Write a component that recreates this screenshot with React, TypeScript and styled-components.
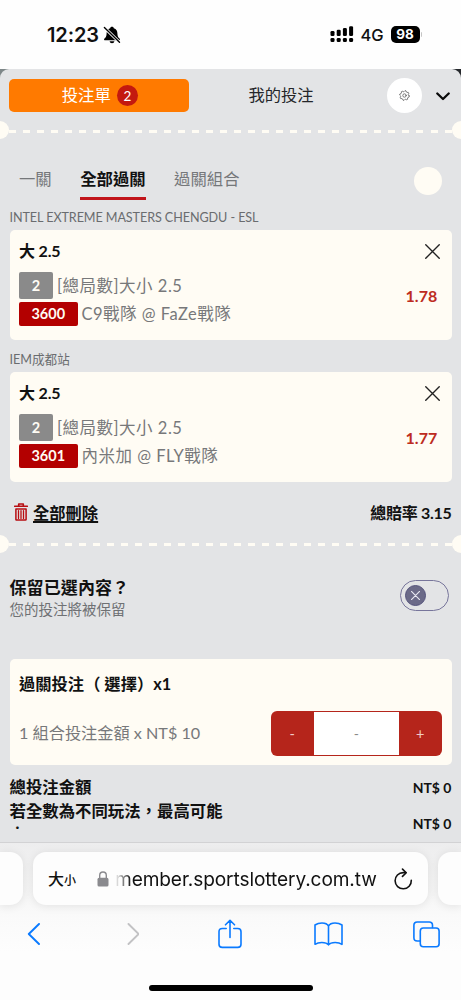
import React from "react";
import styled, { createGlobalStyle } from "styled-components";

const body = `Lato, "Noto Sans CJK TC", sans-serif`;
const system = `Inter, "Noto Sans CJK TC", sans-serif`;
const cream = "#fffcf4";

const GlobalStyle = createGlobalStyle`
  * { box-sizing: border-box; }
  body { margin: 0; background: #fdfdfd; font-family: ${body}; color: #111; }
  button { border: 0; padding: 0; background: none; font: inherit; color: inherit; }
`;

const Screen = styled.main`
  width: 461px;
  height: 1000px;
  overflow: hidden;
  display: flex;
  flex-direction: column;
`;

const StatusBar = styled.header`
  height: 69px;
  flex: none;
  display: flex;
  align-items: center;
  padding: 0 39px 0 47px;
  background: #fefefe;
  font-family: ${system};
`;
const Clock = styled.span`
  font-size: 20px;
  font-weight: 600;
  letter-spacing: -0.1px;
  width: 56px;
`;
const Signals = styled.div`
  margin-left: auto;
  display: flex;
  align-items: center;
`;
const Network = styled.span`
  font-size: 16.5px;
  font-weight: 500;
  width: 22px;
  margin: 0 8px 0 7px;
  white-space: nowrap;
`;
const Battery = styled.span`
  width: 29px;
  height: 17px;
  border-radius: 5px;
  background: #000;
  color: #fff;
  font-size: 13.5px;
  font-weight: 700;
  line-height: 17px;
  text-align: center;
`;
const BatteryTip = styled.i`
  width: 1.5px;
  height: 5px;
  margin-left: 1px;
  background: #c4c4c4;
  border-radius: 0 2px 2px 0;
`;

const Backdrop = styled.div`
  flex: none;
  height: 773px;
  background: linear-gradient(90deg, #7e8788 0 50%, #25282c 50%);
`;
const Sheet = styled.section`
  height: 773px;
  border-radius: 9px 9px 0 0;
  background: #e3e4e6;
  overflow: hidden;
`;
const SlipHeader = styled.div`
  height: 52px;
  display: flex;
  align-items: center;
  padding: 0 10px 0 9px;
`;
const SlipButton = styled.button`
  width: 179.5px;
  height: 33px;
  display: flex;
  align-items: center;
  justify-content: center;
  gap: 6px;
  border-radius: 5px;
  padding: 0 0 2px 2px;
  background: #ff7a00;
  color: #fff;
  font-size: 16.4px;
  font-weight: 400;
`;
const Count = styled.span`
  width: 21px;
  height: 21px;
  border-radius: 50%;
  background: #c4190f;
  font-size: 13.5px;
  line-height: 22px;
  text-align: center;
  margin-top: 2px;
`;
const MyBets = styled.button`
  width: 185px;
  padding-bottom: 2px;
  font-size: 16.3px;
  text-align: center;
  color: #24262a;
`;
const Round = styled.button<{ $size: number; $color: string }>`
  width: ${(p) => p.$size}px;
  height: ${(p) => p.$size}px;
  border-radius: 50%;
  background: ${(p) => p.$color};
  display: flex;
  align-items: center;
  justify-content: center;
`;
const SettingsButton = styled(Round)`
  margin-left: 13px;
`;
const Collapse = styled.button`
  margin: 2px 0 0 14px;
  display: flex;
`;

const Perforation = styled.div<{ $top: number }>`
  height: 18px;
  margin-top: ${(p) => p.$top}px;
  display: flex;
  align-items: center;
  justify-content: space-between;
  &::before, &::after {
    content: "";
    width: 9px;
    height: 18px;
    background: ${cream};
    border-radius: 0 9px 9px 0;
  }
  &::after { border-radius: 9px 0 0 9px; }
`;
const Dashes = styled.div`
  flex: 1;
  height: 3px;
  margin-top: 2px;
  background: repeating-linear-gradient(90deg, ${cream} 0 7px, transparent 7px 14.05px);
`;

const Tabs = styled.nav`
  height: 31px;
  margin: 28px 19px 0;
  display: flex;
  align-items: flex-start;
`;
const Tab = styled.button<{ $active?: boolean }>`
  height: 32.5px;
  padding-bottom: 5px;
  margin-right: 28.5px;
  font-size: 16.35px;
  line-height: 24px;
  font-weight: ${(p) => (p.$active ? 700 : 400)};
  color: ${(p) => (p.$active ? "#111" : "#75777a")};
  border-bottom: 3.5px solid ${(p) => (p.$active ? "#c1141a" : "transparent")};
`;
const TabExtra = styled.div`
  margin-left: auto;
`;

const League = styled.h3<{ $top: number; $spacing: number }>`
  height: 18px;
  margin: ${(p) => p.$top}px 0 3px 9.5px;
  font-size: 12.6px;
  font-weight: 400;
  line-height: 18px;
  letter-spacing: ${(p) => p.$spacing}px;
  color: #6a6c6f;
`;
const Card = styled.article<{ $height: number }>`
  height: ${(p) => p.$height}px;
  margin: 0 9.5px;
  padding: 0 9.5px;
  border-radius: 5px;
  background: ${cream};
`;
const CardHead = styled.div`
  height: 42px;
  display: flex;
  align-items: center;
  justify-content: space-between;
  padding-right: 2.5px;
`;
const Pick = styled.h2`
  margin: 0;
  padding-bottom: 2px;
  font-size: 16px;
  font-weight: 700;
  letter-spacing: -0.15px;
`;
const CardBody = styled.div`
  display: flex;
  align-items: center;
  justify-content: space-between;
  padding-right: 4.5px;
`;
const Lines = styled.div`
  display: flex;
  flex-direction: column;
  gap: 3.5px;
`;
const Line = styled.div<{ $height: number }>`
  height: ${(p) => p.$height}px;
  display: flex;
  align-items: center;
  gap: 4px;
  font-size: 16.5px;
  letter-spacing: 0.5px;
  color: #77787a;
  white-space: nowrap;
`;
const Tag = styled.span<{ $wide?: boolean }>`
  width: ${(p) => (p.$wide ? 58.5 : 34)}px;
  height: 100%;
  display: flex;
  align-items: center;
  justify-content: center;
  border-radius: 2px;
  background: ${(p) => (p.$wide ? "#b30000" : "#8a8a8a")};
  color: ${cream};
  font-size: 14.5px;
  font-weight: 700;
  letter-spacing: 0;
`;
const LineText = styled.span`
  padding-bottom: 1px;
`;
const Odds = styled.strong`
  font-size: 16px;
  color: #bd2b21;
  letter-spacing: 0.1px;
  margin-bottom: 6px;
`;

const Summary = styled.div`
  height: 28px;
  margin: 16px 9.5px 0 14px;
  display: flex;
  align-items: center;
  font-weight: 700;
  font-size: 16.3px;
`;
const DeleteAll = styled.button`
  display: flex;
  align-items: center;
  gap: 5px;
  text-decoration: underline;
  text-decoration-thickness: 1.5px;
  text-underline-offset: 2px;
`;
const TotalOdds = styled.span`
  margin-left: auto;
  font-size: 16px;
  letter-spacing: -0.3px;
`;

const Keep = styled.div`
  height: 44px;
  margin: 23px 12px 0 9.5px;
  display: flex;
  align-items: center;
  justify-content: space-between;
`;
const KeepTitle = styled.div`
  font-size: 17px;
  line-height: 24px;
  font-weight: 700;
  letter-spacing: 0.1px;
`;
const KeepNote = styled.div`
  font-size: 14.5px;
  line-height: 20px;
  color: #6f7174;
`;
const Toggle = styled.button`
  width: 49px;
  height: 31px;
  margin-top: -4px;
  border: 1px solid #77759b;
  border-radius: 16px;
  padding-left: 4px;
  display: flex;
  align-items: center;
`;
const Knob = styled.span`
  width: 21px;
  height: 21px;
  border-radius: 50%;
  border: 1px solid #55537c;
  background: #6b6a88;
  display: flex;
  align-items: center;
  justify-content: center;
`;

const StakeCard = styled(Card)`
  margin-top: 39px;
`;
const StakeTitle = styled.h2`
  margin: 0;
  padding-top: 12px;
  height: 52px;
  font-size: 16.3px;
  line-height: 26px;
  font-weight: 700;
`;
const StakeRow = styled.div`
  display: flex;
  align-items: center;
  justify-content: space-between;
  font-size: 16.2px;
  color: #77787a;
`;
const StakeText = styled.span`
  padding-bottom: 2px;
`;
const Stepper = styled.div`
  width: 171.5px;
  height: 45px;
  display: flex;
  border-radius: 6px;
  overflow: hidden;
  background: #b5251b;
`;
const StepButton = styled.button`
  width: 43.5px;
  color: #f0cbc6;
  font-size: 14.5px;
`;
const StepValue = styled.div`
  flex: 1;
  margin: 1px 0;
  background: #fff;
  color: #888;
  font-size: 14px;
  line-height: 43px;
  text-align: center;
`;

const Totals = styled.div`
  height: 72px;
  margin: 10px 9.5px 0;
  display: flex;
  justify-content: space-between;
  font-weight: 700;
`;
const TotalLabels = styled.div`
  font-size: 16.4px;
  line-height: 24px;
`;
const Trail = styled.div`
  padding-left: 6px;
  line-height: 8px;
  height: 8px;
  font-size: 14px;
`;
const TotalValues = styled.div`
  font-size: 14px;
  line-height: 18px;
  padding-top: 4px;
  display: flex;
  flex-direction: column;
  gap: 18px;
`;

const Browser = styled.footer`
  flex: 1;
  border-top: 1px solid #d2d2d4;
  background: linear-gradient(#ededee 0, #f3f3f3 35px, #fafafa 75px, #fdfdfd 110px);
  font-family: ${system};
`;
const AddressStrip = styled.div`
  height: 53px;
  margin-top: 9px;
  display: flex;
  justify-content: space-between;
`;
const PeekTab = styled.div<{ $right?: boolean }>`
  width: 23px;
  border-radius: ${(p) => (p.$right ? "13px 0 0 13px" : "0 13px 13px 0")};
  background: #fdfdfd;
  box-shadow: 0 1px 10px rgba(0, 0, 0, 0.09);
`;
const AddressBar = styled.div`
  width: 395px;
  border-radius: 13px;
  background: #fdfdfd;
  box-shadow: 0 1px 10px rgba(0, 0, 0, 0.09);
  display: flex;
  align-items: center;
  padding: 0 15px;
`;
const TextSize = styled.span`
  width: 49px;
  padding-bottom: 2px;
  font-size: 16px;
  font-weight: 500;
  white-space: nowrap;
  small { font-size: 12px; }
`;
const Url = styled.span`
  width: 262px;
  margin: 0 auto 0 6px;
  font-size: 19.1px;
  letter-spacing: -0.1px;
  white-space: nowrap;
  color: #111;
  mask-image: linear-gradient(90deg, transparent, #000 16px);
`;
const Toolbar = styled.div`
  height: 58px;
  margin: 0 -14px 0 -15px;
  display: grid;
  grid-template-columns: repeat(5, 1fr);
  align-items: center;
  justify-items: center;
`;
const HomeBar = styled.div`
  width: 164px;
  height: 6px;
  margin: 22px auto 0;
  border-radius: 3px;
  background: #000;
`;

const Svg = styled.svg`
  display: block;
  flex: none;
  fill: none;
  stroke-linecap: round;
  stroke-linejoin: round;
`;

const BellOff = () => (
  <Svg width="18" height="18" viewBox="0 0 18 18">
    <path d="M9 .8C7.900.8 7.300 1.400 7.200 2.200 4.600 3 3.600 5 3.600 7.400c0 2.900-.9 3.900-2.100 5-.8.8-.5 1.800.7 1.800h13.600c1.200 0 1.500-1 .7-1.800-1.200-1.100-2.100-2.100-2.100-5 0-2.400-1-4.400-3.600-5.200C10.700 1.400 10.100.8 9 .8Z" fill="#000" />
    <path d="M6.600 15.200h4.800c-.2 1.300-1.100 2-2.400 2s-2.200-.7-2.400-2Z" fill="#000" />
    <path d="M1.400 1.600 16.500 16.300" stroke="#fefefe" strokeWidth="3" />
    <path d="M1.400 1.600 16.500 16.300" stroke="#000" strokeWidth="1.4" />
  </Svg>
);

const SignalBars = () => (
  <Svg width="24" height="17" viewBox="0 0 24 17">
    {[0, 1, 2, 3].map((i) => (
      <g key={i} fill="#000">
        <rect x={0.5 + i * 6.2} y={[5, 3.7, 2.1, 0.3][i]} width="4" height={[5, 6.3, 7.9, 9.7][i]} rx="1.3" />
        <rect x={0.5 + i * 6.2} y="12" width="4" height="4" rx="1.3" />
      </g>
    ))}
  </Svg>
);

const gearOutline = Array.from({ length: 32 }, (_, i) => {
  const radius = i % 4 < 2 ? 9.8 : 7.9;
  const angle = ((i + 0.5) * Math.PI) / 16;
  return `${(11 + radius * Math.cos(angle)).toFixed(2)},${(11 + radius * Math.sin(angle)).toFixed(2)}`;
}).join(" ");

const Gear = () => (
  <Svg width="11" height="11" viewBox="0 0 22 22" stroke="#555" strokeWidth="1.5">
    <polygon points={gearOutline} />
    <circle cx="11" cy="11" r="3.4" />
  </Svg>
);

const Cross = ({ size, color, width }: { size: number; color: string; width: number }) => (
  <Svg width={size} height={size} viewBox="0 0 14 14" stroke={color} strokeWidth={width}>
    <path d="m.7.7 12.6 12.6M13.3.7.7 13.3" />
  </Svg>
);

const Trash = () => (
  <Svg width="14" height="18" viewBox="0 0 14 18">
    <path d="M.7 3.2h12.6M4.7 3V1h4.6v2" stroke="#b80d12" strokeWidth="1.6" />
    <path d="M1.9 6h10.2v10.400c0 .4-.3.700-.7.700H2.600c-.4 0-.7-.3-.7-.7Z" stroke="#b80d12" strokeWidth="1.5" />
    <path d="M4.500 7.600v7.800M7 7.600v7.800M9.500 7.600v7.800" stroke="#b80d12" strokeWidth="1.3" />
  </Svg>
);

const Lock = () => (
  <Svg width="12" height="16" viewBox="0 0 12 16">
    <path d="M2.7 7V4.5C2.7 2.3 4 1 6 1s3.3 1.3 3.3 3.5V7" stroke="#8a8a8e" strokeWidth="1.4" />
    <rect x=".5" y="6.8" width="11" height="8.8" rx="1.6" fill="#8a8a8e" />
  </Svg>
);

const Reload = () => (
  <Svg width="20" height="22" viewBox="0 0 20 22" stroke="#111" strokeWidth="1.6">
    <path d="M12.800 4.600H10.200A8.100 8.100 0 1 0 18.300 12.300" />
    <path d="m9.500 1.100 3.700 3.600-3.700 3.700" />
  </Svg>
);

const blue = "#0a7aff";

const bets = [
  { league: "INTEL EXTREME MASTERS CHENGDU - ESL", top: 11, code: "3600", match: "C9戰隊 @ FaZe戰隊", odds: "1.78", spacing: -0.08 },
  { league: "IEM成都站", top: 11.5, code: "3601", match: "內米加 @ FLY戰隊", odds: "1.77", spacing: 0 },
];

export default function App() {
  return (
    <Screen>
      <GlobalStyle />
      <StatusBar>
        <Clock>12:23</Clock>
        <BellOff />
        <Signals>
          <SignalBars />
          <Network>4G</Network>
          <Battery>98</Battery>
          <BatteryTip />
        </Signals>
      </StatusBar>
      <Backdrop>
        <Sheet>
          <SlipHeader>
            <SlipButton>投注單<Count>2</Count></SlipButton>
            <MyBets>我的投注</MyBets>
            <SettingsButton $size={35} $color="#fff"><Gear /></SettingsButton>
            <Collapse>
              <Svg width="14" height="9" viewBox="0 0 14 9" stroke="#0b0b0b" strokeWidth="2.3">
                <path d="m1.3 1.5 5.7 5.5 5.7-5.5" />
              </Svg>
            </Collapse>
          </SlipHeader>
          <Perforation $top={0}><Dashes /></Perforation>
          <Tabs>
            <Tab>一關</Tab>
            <Tab $active>全部過關</Tab>
            <Tab>過關組合</Tab>
            <TabExtra><Round $size={28} $color={cream} /></TabExtra>
          </Tabs>
          {bets.map((bet) => (
            <React.Fragment key={bet.code}>
              <League $top={bet.top} $spacing={bet.spacing}>{bet.league}</League>
              <Card $height={109.5}>
                <CardHead>
                  <Pick>大 2.5</Pick>
                  <Cross size={15} color="#222" width={1.3} />
                </CardHead>
                <CardBody>
                  <Lines>
                    <Line $height={26.5}><Tag>2</Tag><LineText>[總局數]大小 2.5</LineText></Line>
                    <Line $height={23.5}><Tag $wide>{bet.code}</Tag><LineText>{bet.match}</LineText></Line>
                  </Lines>
                  <Odds>{bet.odds}</Odds>
                </CardBody>
              </Card>
            </React.Fragment>
          ))}
          <Summary>
            <DeleteAll><Trash />全部刪除</DeleteAll>
            <TotalOdds>總賠率 3.15</TotalOdds>
          </Summary>
          <Perforation $top={9}><Dashes /></Perforation>
          <Keep>
            <div>
              <KeepTitle>保留已選內容？</KeepTitle>
              <KeepNote>您的投注將被保留</KeepNote>
            </div>
            <Toggle><Knob><Cross size={9} color="#e8e8f2" width={1.8} /></Knob></Toggle>
          </Keep>
          <StakeCard $height={106.5}>
            <StakeTitle>過關投注（ 選擇）x1</StakeTitle>
            <StakeRow>
              <StakeText>1 組合投注金額 x NT$ 10</StakeText>
              <Stepper>
                <StepButton>-</StepButton>
                <StepValue>-</StepValue>
                <StepButton>+</StepButton>
              </Stepper>
            </StakeRow>
          </StakeCard>
          <Totals>
            <TotalLabels>
              <div>總投注金額</div>
              <div>若全數為不同玩法，最高可能</div>
              <Trail>·</Trail>
            </TotalLabels>
            <TotalValues>
              <span>NT$ 0</span>
              <span>NT$ 0</span>
            </TotalValues>
          </Totals>
        </Sheet>
      </Backdrop>
      <Browser>
        <AddressStrip>
          <PeekTab />
          <AddressBar>
            <TextSize>大<small>小</small></TextSize>
            <Lock />
            <Url>member.sportslottery.com.tw</Url>
            <Reload />
          </AddressBar>
          <PeekTab $right />
        </AddressStrip>
        <Toolbar>
          <Svg width="14" height="22" viewBox="0 0 14 22" stroke={blue} strokeWidth="1.9"><path d="M12 1 1.8 11 12 21" /></Svg>
          <Svg width="14" height="22" viewBox="-2 0 14 22" stroke="#c2c2c4" strokeWidth="1.900"><path d="m1.500 1 10.200 10L1.500 21" /></Svg>
          <Svg width="24" height="30" viewBox="0 0 24 30" stroke={blue} strokeWidth="1.6">
            <path d="M8.2 9.5H4.3c-2.2 0-3.3 1-3.3 3.2v12.5c0 2.2 1.1 3.2 3.3 3.2h15.4c2.2 0 3.3-1 3.3-3.2V12.7c0-2.2-1.1-3.2-3.3-3.2h-3.9M12 18.500V1.500M7.500 5.800 12 1.300l4.500 4.500" />
          </Svg>
          <Svg width="29" height="24" viewBox="0 0 29 24" stroke={blue} strokeWidth="1.6">
            <path d="M14.500 4C13.400 2 10.900 1 8 1 5.200 1 2.900 1.700 1 3v19.300c1.900-1.300 4.200-1.800 6.800-1.800 3 0 5.400.7 6.700 2.300 1.300-1.600 3.700-2.300 6.700-2.300 2.600 0 4.900.5 6.800 1.800V3c-1.900-1.300-4.200-2-7-2-2.900 0-5.400 1-6.500 3Zm0 0v18.500" />
          </Svg>
          <Svg width="27" height="27" viewBox="0 0 27 27" stroke={blue} strokeWidth="1.6">
            <rect x="7.3" y="7" width="18.8" height="18.7" rx="3" />
            <path d="M7 20H4.2C2 20 .9 18.9 .9 16.7V4.3C.9 2.1 2 1 4.2 1h12c2.2 0 3.3 1.1 3.3 3.3V6.5" />
          </Svg>
        </Toolbar>
        <HomeBar />
      </Browser>
    </Screen>
  );
}
